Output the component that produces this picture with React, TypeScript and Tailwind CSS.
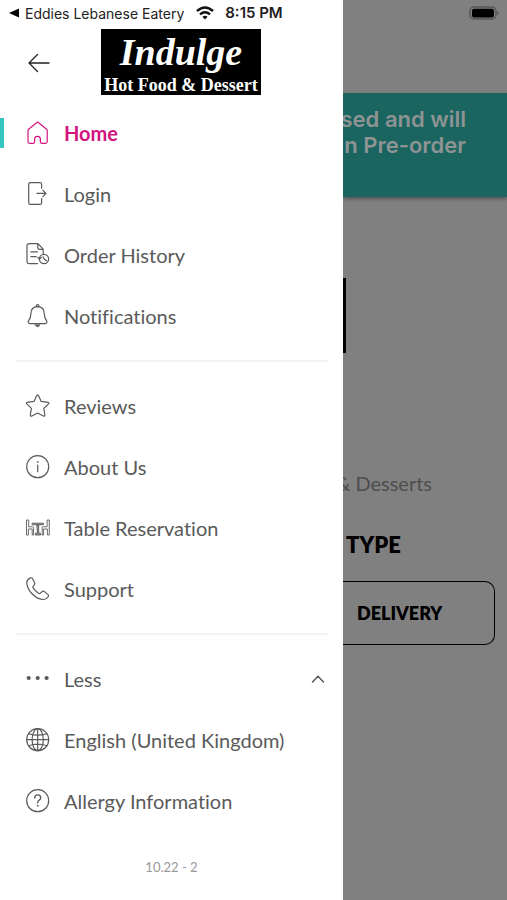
import type { ReactNode } from "react";

const stroke = {
  fill: "none",
  stroke: "currentColor",
  strokeWidth: 1.2,
  strokeLinecap: "round" as const,
  strokeLinejoin: "round" as const,
};

function Icon({ children }: { children: ReactNode }) {
  return (
    <svg viewBox="0 0 24 24" className="size-6 shrink-0" aria-hidden="true" {...stroke}>
      {children}
    </svg>
  );
}

const icons = {
  home: (
    <Icon>
      <path d="M11.2 1.3 2.6 8.2Q2 8.7 2 9.5V20.6Q2 22.4 3.8 22.4H7Q8.6 22.4 8.6 20.8V18.2Q8.6 15.4 11.5 15.4T14.4 18.2V20.8Q14.4 22.4 16 22.4H19.4Q21.2 22.4 21.2 20.6V9.5Q21.2 8.7 20.6 8.2L12 1.3Q11.6 1 11.2 1.3Z" />
    </Icon>
  ),
  login: (
    <Icon>
      <path d="M15.6 6.3V2.1Q15.6.6 13.9.6H4.4Q2.7.6 2.7 2.1V20.7Q2.7 22.4 4.4 22.4H13.9Q15.6 22.4 15.6 20.7V16.5M11 11.4H20M16.8 8.2 20 11.4 16.8 14.6" />
    </Icon>
  ),
  history: (
    <Icon>
      <path d="M11.5 20.7H3.5Q1 20.7 1 18.2V2.8Q1 .6 3.5.6H12L17.2 6.2V10.5M11.8.8V4.4Q11.8 6.3 13.7 6.3H17M4.8 8.8H11.5M4.8 13.6H10.2" />
      <circle cx="18" cy="16" r="4.6" />
      <path d="M17 13.8 18.3 16.3 20.6 17.8M11.8 14.4 13.4 16.2 15.2 14.5" />
    </Icon>
  ),
  bell: (
    <Icon>
      <path d="M10.3 2.6V1.9Q10.3.6 11.6.6T12.9 1.9V2.6M11.6 2.6C6.8 2.8 4.9 6 4.9 9.7 4.9 13.5 4.2 14.7 2.7 16.5 1.5 18 2.3 19.6 4 19.6H19.2Q21.7 19.4 20.6 16.9C19.1 15 18.3 13.5 18.3 9.7 18.3 6 16.4 2.8 11.6 2.6Z" />
      <path d="M9.3 20.8H13.9Q13.3 22.8 11.6 22.8T9.3 20.8Z" fill="currentColor" strokeWidth="0.6" />
    </Icon>
  ),
  star: (
    <Icon>
      <path d="M10.7 1.5Q11.6.1 12.5 1.5L15.2 7.4 22 8.3Q23.6 8.7 22.5 9.9L17.8 14.4 18.9 21Q18.8 22.7 17.3 22L11.6 19 5.9 22Q4.3 22.7 4.3 21L5.4 14.4.7 9.9Q-.3 8.7 1.2 8.3L8 7.4Z" />
    </Icon>
  ),
  info: (
    <Icon>
      <circle cx="11.7" cy="11.7" r="11" />
      <path d="M11.7 10.1V16.7" />
      <circle cx="11.7" cy="6.9" r="0.6" fill="currentColor" strokeWidth="0.4" />
    </Icon>
  ),
  table: (
    <Icon>
      <path d="M.9 4H2.7V10.8H6.6Q7.6 10.8 7.6 11.7V19H6.2V13H2.4V19H.9ZM22.9 4H21.1V10.8H17.2Q16.2 10.8 16.2 11.7V19H17.6V13H21.4V19H22.9Z" strokeWidth="0.9" />
      <path d="M6.4 7.2H17.4V8.8H6.4ZM11.1 9H12.7V17.2H14.5V19H9.3V17.2H11.1Z" strokeWidth="0.9" fill="#999" />
    </Icon>
  ),
  phone: (
    <Icon>
      <path d="M4.4.9Q1 2.5.8 5.5C.9 13.5 9.7 22.5 17.6 22.5Q20.7 22.3 22.3 19.5 22.8 18.3 21.9 17.4L18.4 14.6Q17.3 13.8 16.2 14.6L14.2 16.3Q13.4 16.9 12.5 16.3 9.3 14.1 7.1 10.9 6.5 10 7.2 9.2L8.4 7.7Q9.2 6.6 8.5 5.5L6.5 1.6Q5.7.4 4.4.9Z" />
    </Icon>
  ),
  dots: (
    <Icon>
      <g fill="currentColor" stroke="none">
        <circle cx="2.7" cy="11" r="2.1" />
        <circle cx="11.7" cy="11" r="2.1" />
        <circle cx="20.6" cy="11" r="2.1" />
      </g>
    </Icon>
  ),
  globe: (
    <Icon>
      <circle cx="11.7" cy="11.7" r="11" />
      <ellipse cx="11.7" cy="11.7" rx="5.6" ry="11" />
      <path d="M11.7.7V22.7M.7 11.7H22.7M2.6 5.7Q11.7 8.7 20.8 5.7M2.6 17.7Q11.7 14.7 20.8 17.7" />
    </Icon>
  ),
  help: (
    <Icon>
      <circle cx="11.7" cy="11.7" r="11" />
      <path d="M8.7 9Q8.7 5.9 11.7 5.9T14.7 8.7Q14.7 10.2 13.2 11.1 11.7 12 11.7 13.8" strokeWidth="1.4" />
      <circle cx="11.7" cy="16.7" r="0.7" fill="currentColor" strokeWidth="0.4" />
    </Icon>
  ),
};

type Item = { label: string; icon: keyof typeof icons; active?: boolean };

const main: Item[] = [
  { label: "Home", icon: "home", active: true },
  { label: "Login", icon: "login" },
  { label: "Order History", icon: "history" },
  { label: "Notifications", icon: "bell" },
];
const about: Item[] = [
  { label: "Reviews", icon: "star" },
  { label: "About Us", icon: "info" },
  { label: "Table Reservation", icon: "table" },
  { label: "Support", icon: "phone" },
];
const extra: Item[] = [
  { label: "English (United Kingdom)", icon: "globe" },
  { label: "Allergy Information", icon: "help" },
];

const label =
  "ml-3.5 h-[22px] overflow-hidden whitespace-nowrap text-[20px] leading-[22px] [font-variant-ligatures:none]";

function Rows({ items }: { items: Item[] }) {
  return (
    <ul>
      {items.map((item) => (
        <li key={item.label}>
          <a
            href="#"
            aria-current={item.active ? "page" : undefined}
            className={`flex h-[61px] items-center ${item.active ? "font-bold text-[#d3147f]" : "text-[#5a5a5a]"}`}
          >
            <span className={`mr-[22px] h-[30px] w-1 ${item.active ? "bg-[#35c6bf]" : ""}`} />
            {icons[item.icon]}
            <span className={label}>{item.label}</span>
          </a>
        </li>
      ))}
    </ul>
  );
}

function Divider() {
  return <hr className="ml-4 mr-3.5 mb-[13px] mt-3.5 h-0.5 border-0 bg-[#f4f4f4]" />;
}

function Drawer() {
  return (
    <aside className="flex w-[343px] shrink-0 flex-col bg-white">
      <div className="flex h-7 items-center pb-0.5 pl-[9px] font-['Inter',sans-serif] text-[14px] text-[#222]">
        <svg viewBox="0 0 10 10" className="mr-1.5 size-2.5 fill-black" aria-hidden="true">
          <path d="M0 5 10 .6V9.4Z" />
        </svg>
        <span className="whitespace-nowrap">Eddies Lebanese Eatery</span>
        <svg viewBox="0 0 18 14" className="ml-3 h-3.5 w-[18px]" fill="none" stroke="#111" strokeWidth="2.4" aria-hidden="true">
          <path d="M1 5Q9-2 17 5M4 8.3Q9 4 14 8.3" />
          <path d="M6.4 10.8Q9 8.8 11.6 10.8L9 13.5Z" fill="#111" stroke="none" />
        </svg>
        <span className="ml-[11px] whitespace-nowrap text-[15px] font-semibold">8:15 PM</span>
      </div>
      <header className="flex h-[74px] items-start pl-7 pt-px">
        <button type="button" aria-label="Back" className="mt-[23px]">
          <svg viewBox="0 0 22 22" className="size-[22px] text-[#222]" {...stroke} strokeWidth={1.3}>
            <path d="M21 11H1M9.5 2.5 1 11 9.5 19.5" />
          </svg>
        </button>
        <div className="ml-[51px] flex h-[66px] w-40 flex-col items-center bg-black text-white">
          <span className="font-['Liberation_Serif',serif] text-[38px] font-bold italic leading-[46px]">Indulge</span>
          <span className="whitespace-nowrap font-['Liberation_Serif',serif] text-[18px] font-bold leading-5">
            Hot Food &amp; Dessert
          </span>
        </div>
      </header>
      <nav>
        <Rows items={main} />
        <Divider />
        <Rows items={about} />
        <Divider />
        <button
          type="button"
          aria-expanded="true"
          className="flex h-[61px] w-full items-center pl-[26px] pr-[18px] text-[#5a5a5a]"
        >
          {icons.dots}
          <span className={label}>Less</span>
          <svg viewBox="0 0 14 14" className="ml-auto size-3.5" {...stroke} strokeWidth={1.5}>
            <path d="M1.5 10 7 4.2 12.5 10" />
          </svg>
        </button>
        <Rows items={extra} />
      </nav>
      <footer className="mt-[26px] text-center text-[13px] leading-5 text-[#999]">10.22 - 2</footer>
    </aside>
  );
}

function DimmedPage() {
  return (
    <main className="flex min-w-0 flex-1 flex-col overflow-hidden bg-[#808080]">
      <div className="flex h-[93px] items-start justify-end pr-[7px] pt-1.5">
        <svg viewBox="0 0 31 15" className="h-[15px] w-[31px]" role="img" aria-label="Battery">
          <rect x="1" y="1" width="26" height="12" rx="4" fill="#808080" stroke="#555" strokeWidth="1.5" />
          <rect x="3" y="2.8" width="22" height="8.6" rx="2" />
          <path d="M28.5 5Q31 7 28.5 9Z" fill="#555" />
        </svg>
      </div>
      <div className="flex h-[104px] flex-col items-end whitespace-nowrap bg-[#1a655f] pr-[41px] pt-[13px] font-['Inter',sans-serif] text-[22px] font-semibold leading-[26px] text-[#8e9394] shadow-[0_2px_4px_rgba(0,0,0,0.35)]">
        <span>osed and will</span>
        <span>n Pre-order</span>
      </div>
      <div className="mt-[81px] h-[75px] w-[3px] bg-black" />
      <p className="mt-[118px] flex justify-end whitespace-nowrap pr-[75px] text-[20px] leading-6 text-[#4d4d4d]">
        &amp; Desserts
      </p>
      <h2 className="mt-9 pl-[3px] text-[22px] font-extrabold leading-7">TYPE</h2>
      <button
        type="button"
        className="mr-3 mt-[22px] h-16 rounded-r-[10px] border border-l-0 border-black pl-3.5 text-left text-[18px] font-extrabold"
      >
        DELIVERY
      </button>
    </main>
  );
}

export default function App() {
  return (
    <div className="flex min-h-screen font-['Lato',sans-serif]">
      <Drawer />
      <DimmedPage />
    </div>
  );
}
